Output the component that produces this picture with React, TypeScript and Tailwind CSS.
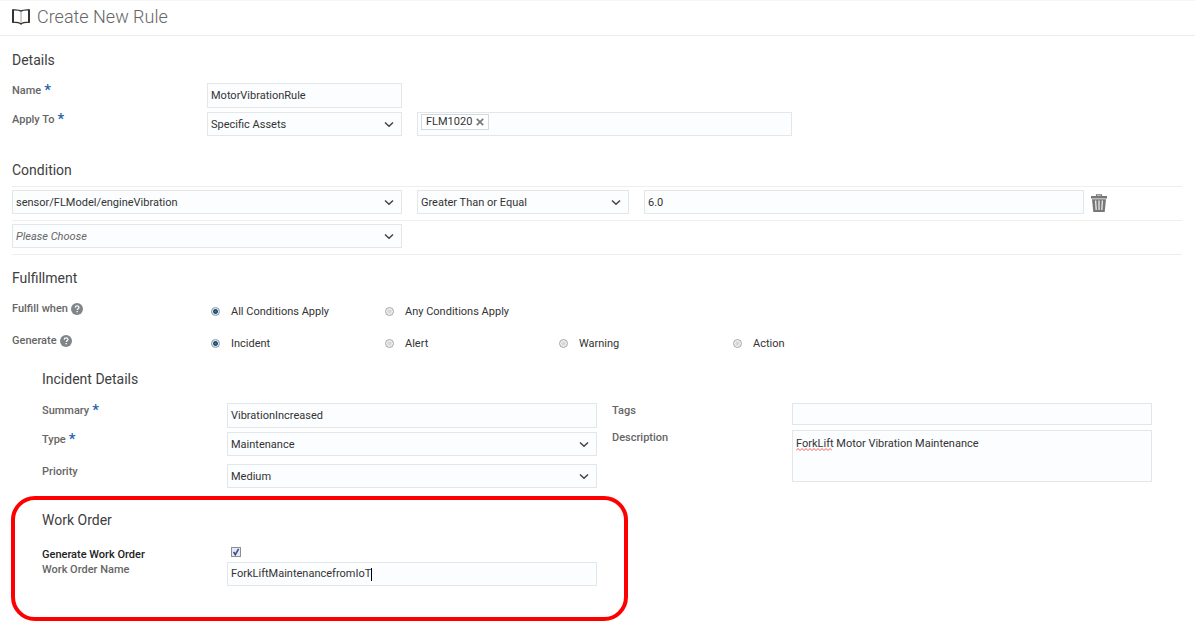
import { useState } from "react";
import type { ReactNode } from "react";

const boxClass = "block w-full rounded-none border border-[#e2e8ea] bg-[#fbfdfe] px-[3px] text-[11px] outline-none";
const inputClass = boxClass + " h-[25px] text-[#333]";
const selectClass = boxClass + " h-[24px] appearance-none pt-[2px]";

function Heading({ children }: { children: ReactNode }) {
  return <h2 className="text-[14px] leading-[20px] text-[#404040]">{children}</h2>;
}

function Label({ htmlFor, required, children }: { htmlFor: string; required?: boolean; children: ReactNode }) {
  return (
    <label htmlFor={htmlFor} className="flex items-start text-[11px] leading-[16px] font-medium text-[#666]">
      {children}
      {required && <span className="ml-[3px] text-[15px] leading-[14px] font-medium text-[#1f62ab]">*</span>}
    </label>
  );
}

function Select({ id, label, options, placeholder }: { id: string; label?: string; options: string[]; placeholder?: boolean }) {
  return (
    <div className="relative">
      <select
        id={id}
        aria-label={label}
        className={placeholder ? selectClass + " text-[#666] italic" : selectClass + " text-[#333]"}
      >
        {options.map((o) => (
          <option key={o}>{o}</option>
        ))}
      </select>
      <svg className="pointer-events-none absolute top-[9px] right-[8px] h-[7px] w-[10px]" viewBox="0 0 10 7" fill="none">
        <path d="M1 1.5 5 5.2 9 1.5" stroke="#444" strokeWidth="1.5" />
      </svg>
    </div>
  );
}

function Help({ label }: { label: string }) {
  return (
    <button type="button" aria-label={label} className="ml-[3px] h-[12px] w-[12px]">
      <svg viewBox="0 0 12 12" className="block h-[12px] w-[12px]">
        <circle cx="6" cy="6" r="6" fill="#7f8589" />
        <path d="M4.2 4.7c0-1.1.8-1.8 1.9-1.8S8 3.5 8 4.5c0 1.3-1.8 1.3-1.8 2.6" fill="none" stroke="#fff" strokeWidth="1.2" />
        <rect x="5.5" y="8" width="1.3" height="1.3" fill="#fff" />
      </svg>
    </button>
  );
}

function RadioRow({ title, name, options }: { title: string; name: string; options: string[] }) {
  const [value, setValue] = useState(options[0]);
  return (
    <div
      role="radiogroup"
      aria-label={title}
      className="grid grid-cols-[195fr_174fr_174fr_174fr_453fr] items-start text-[11px] leading-[16px]"
    >
      <div className="flex items-center font-medium text-[#666]">
        {title}
        <Help label={"Help for " + title} />
      </div>
      {options.map((o) => (
        <label key={o} className="mt-[3px] flex items-start gap-[11px] pl-[4px] text-[#333]">
          <input
            type="radio"
            name={name}
            checked={value === o}
            onChange={() => setValue(o)}
            className="mt-[3px] h-[9px] w-[9px] appearance-none rounded-full border border-[#a3a7aa] bg-[radial-gradient(circle,#d6d6d6_20%,#f8f8f8_75%)] checked:border-[#8d9aa3] checked:bg-[radial-gradient(circle,#2c86b5_0%,#123a5c_38%,#dfe7ec_58%)]"
          />
          {o}
        </label>
      ))}
    </div>
  );
}

export default function App() {
  const [tags, setTags] = useState(["FLM1020"]);
  return (
    <div className="bg-white font-[Roboto,sans-serif] text-[#333]">
      <header className="flex h-[36px] items-center gap-[7px] border-t border-b border-t-[#f5f5f5] border-b-[#ececec] pb-[2px] pl-[12px]">
        <svg viewBox="0 0 18 16" className="h-[16px] w-[18px]" fill="none">
          <path d="M9 2.3C7.4.9 5 .8 1 1v12.2c3.6 0 6.4 0 8 1.8 1.6-1.8 4.4-1.8 8-1.8V1C13 .8 10.6.9 9 2.3Z" stroke="#333" strokeWidth="1.3" />
          <path d="M9 2.3v11.5" stroke="#b79a85" strokeWidth="1" />
          <path d="M1 .5v13.3M17 .5v13.3" stroke="#333" strokeWidth="2" />
        </svg>
        <h1 className="text-[18px] leading-[24px] font-light text-[#666]">Create New Rule</h1>
      </header>

      <main>
        <form onSubmit={(e) => e.preventDefault()}>
          <section className="mr-[13px] ml-[12px] pt-[14px]">
            <Heading>Details</Heading>
            <div className="mt-[13px] grid grid-cols-[195fr_195fr_780fr] gap-y-[4px]">
              <Label htmlFor="name" required>Name</Label>
              <input id="name" className={inputClass} defaultValue="MotorVibrationRule" />
              <div />
              <Label htmlFor="apply" required>Apply To</Label>
              <Select id="apply" options={["Specific Assets", "All Assets"]} />
              <div className="pl-[15px]">
                <div className="flex h-[24px] w-[49%] items-start gap-[3px] border border-[#e2e8ea] bg-[#fbfdfe] px-[3px] py-px">
                  {tags.map((t) => (
                    <span key={t} className="flex h-[16px] items-center gap-[4px] border border-[#d3dadd] bg-white px-[4px] text-[11px] leading-[14px]">
                      {t}
                      <button type="button" aria-label={"Remove " + t} onClick={() => setTags(tags.filter((x) => x !== t))}>
                        <svg viewBox="0 0 8 8" className="block h-[8px] w-[8px]">
                          <path d="m.8.8 6.4 6.4M7.2.8.8 7.2" stroke="#777" strokeWidth="1.7" />
                        </svg>
                      </button>
                    </span>
                  ))}
                  <input aria-label="Assets" className="h-[16px] min-w-0 flex-1 bg-transparent text-[11px] outline-none" />
                </div>
              </div>
            </div>
          </section>

          <section className="mr-[13px] ml-[12px] pt-[24px]">
            <Heading>Condition</Heading>
            <div className="mt-[6px] grid grid-cols-[390fr_212fr_538fr] gap-x-[15px] border-t border-b border-[#eeeeee] pt-[3px] pb-[6px]">
              <Select id="attribute" label="Attribute" options={["sensor/FLModel/engineVibration"]} />
              <Select id="operator" label="Operator" options={["Greater Than or Equal", "Less Than or Equal", "Equals"]} />
              <div className="flex h-[24px] items-center gap-[7px]">
                <input aria-label="Value" className={boxClass + " h-[24px] text-[#333]"} defaultValue="6.0" />
                <div className="w-[91px] shrink-0">
                  <button type="button" aria-label="Delete condition" className="mt-[2px] block">
                    <svg viewBox="0 0 16 18" className="block h-[18px] w-[16px]">
                      <path d="M5.5 2.5V.8h5v1.7" fill="none" stroke="#777" strokeWidth="1.2" />
                      <path d="M0 2h16v2.5H0z" fill="#777" />
                      <path d="M1 5.2h14L13.7 18H2.3Z" fill="#777" />
                      <path d="M4.6 6.5 5.2 16M8 6.5V16M11.4 6.5 10.8 16" stroke="#e8edf0" strokeWidth="1.3" />
                    </svg>
                  </button>
                </div>
              </div>
            </div>
            <div className="grid grid-cols-[390fr_765fr] gap-x-[15px] border-b border-[#eeeeee] pt-[3px] pb-[6px]">
              <Select id="next" label="Additional condition" options={["Please Choose"]} placeholder />
            </div>
          </section>

          <section className="mr-[13px] ml-[12px] pt-[13px]">
            <Heading>Fulfillment</Heading>
            <div className="mt-[13px] flex flex-col gap-[13px]">
              <RadioRow title="Fulfill when" name="fulfill" options={["All Conditions Apply", "Any Conditions Apply"]} />
              <RadioRow title="Generate" name="generate" options={["Incident", "Alert", "Warning", "Action"]} />
            </div>
          </section>

          <section className="mr-[43px] ml-[42px] pt-[17px]">
            <Heading>Incident Details</Heading>
            <div className="mt-[14px] grid grid-cols-[555fr_540fr] gap-x-[15px]">
              <div className="grid grid-cols-[1fr_2fr] content-start gap-y-[4px]">
                <Label htmlFor="summary" required>Summary</Label>
                <input id="summary" className={inputClass} defaultValue="VibrationIncreased" />
                <Label htmlFor="type" required>Type</Label>
                <Select id="type" options={["Maintenance", "Breakdown"]} />
                <div className="col-span-2 mt-[4px] grid grid-cols-[1fr_2fr]">
                  <Label htmlFor="priority">Priority</Label>
                  <Select id="priority" options={["Medium", "High", "Low"]} />
                </div>
              </div>
              <div className="grid grid-cols-[1fr_2fr] content-start gap-y-[5px]">
                <Label htmlFor="tags">Tags</Label>
                <input id="tags" className={boxClass + " h-[22px] text-[#333]"} />
                <Label htmlFor="description">Description</Label>
                <div className="relative">
                  <textarea
                    id="description"
                    className={boxClass + " h-[52px] resize-none py-[5px] leading-[16px] text-[#333]"}
                    defaultValue="ForkLift Motor Vibration Maintenance"
                  />
                  <svg className="pointer-events-none absolute top-[18px] left-[4px] h-[3px] w-[36px]" viewBox="0 0 36 3" fill="none">
                    <path d="M0 2.5 2 .5l2 2 2-2 2 2 2-2 2 2 2-2 2 2 2-2 2 2 2-2 2 2 2-2 2 2 2-2 2 2 2-2 2 2" stroke="#f33" strokeWidth=".8" />
                  </svg>
                </div>
              </div>
            </div>
          </section>

          <div className="mt-[8px] mr-[12px] mb-[10px] ml-[11px] grid grid-cols-[617fr_555fr]">
            <section className="rounded-[24px] border-4 border-[#fe0000] px-[27px] pt-[10px] pb-[31px]">
              <Heading>Work Order</Heading>
              <div className="mt-[17px] grid grid-cols-[1fr_2fr]">
                <label htmlFor="generate-order" className="text-[11px] leading-[15px] font-medium text-[#222]">
                  Generate Work Order
                </label>
                <div className="relative ml-[4px] h-[10px] w-[10px]">
                  <input
                    id="generate-order"
                    type="checkbox"
                    defaultChecked
                    className="peer block h-[10px] w-[10px] appearance-none border border-[#8e8f8f] bg-[#e6eaf0]"
                  />
                  <svg viewBox="0 0 10 10" className="pointer-events-none absolute inset-0 hidden h-[10px] w-[10px] peer-checked:block">
                    <path d="M2.6 4.8 4.3 7.6 7.6 1.8" fill="none" stroke="#354e91" strokeWidth="1.6" />
                  </svg>
                </div>
                <Label htmlFor="order-name">Work Order Name</Label>
                <div className="flex h-[24px] items-center border border-[#e2e8ea] bg-[#fbfdfe] pl-[3px]">
                  <input
                    id="order-name"
                    className="field-sizing-content max-w-full bg-transparent text-[11px] outline-none"
                    defaultValue="ForkLiftMaintenancefromIoT"
                  />
                  <span className="h-[13px] w-px bg-black" />
                </div>
              </div>
            </section>
          </div>
        </form>
      </main>
    </div>
  );
}
